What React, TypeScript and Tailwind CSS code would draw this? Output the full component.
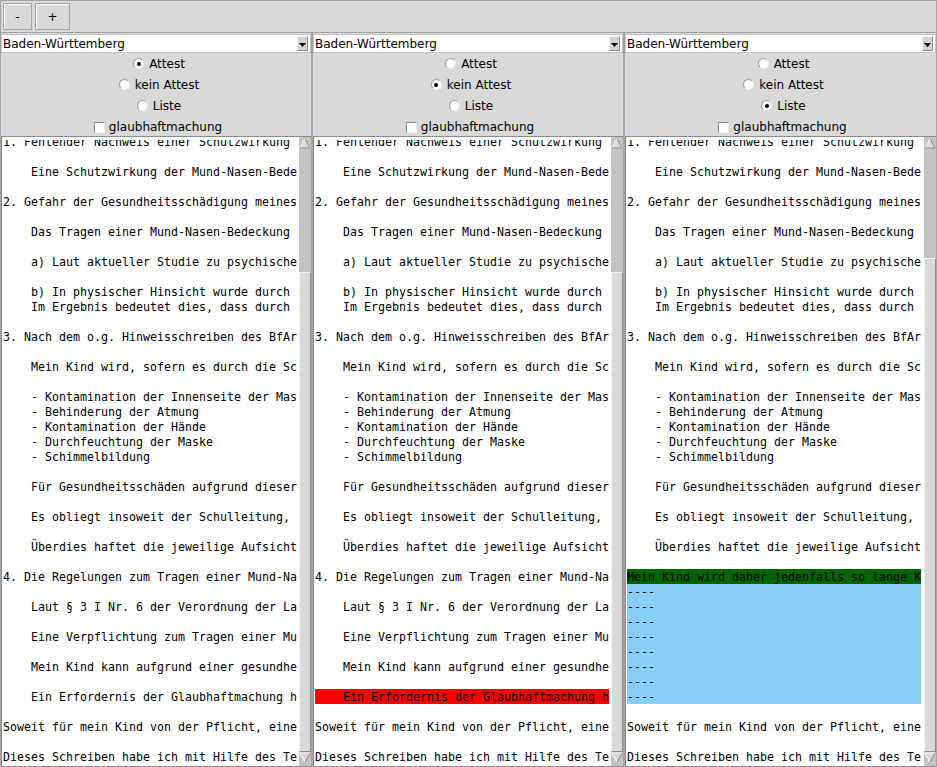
import React from "react";

type Row = { text: string; bg?: string };

const partOne = [
  "1. Fehlender Nachweis einer Schutzwirkung der Mund-Nasen-Bedeckung",
  "",
  "    Eine Schutzwirkung der Mund-Nasen-Bedeckung für Dritte ist wissenschaftlich nicht belegt.",
  "",
  "2. Gefahr der Gesundheitsschädigung meines Kindes",
  "",
  "    Das Tragen einer Mund-Nasen-Bedeckung birgt erhebliche gesundheitliche Risiken.",
  "",
  "    a) Laut aktueller Studie zu psychischen und physischen Folgen des Maskentragens",
  "",
  "    b) In physischer Hinsicht wurde durch Messungen festgestellt, dass",
  "    Im Ergebnis bedeutet dies, dass durch das Tragen der Maske die Atmung",
  "",
  "3. Nach dem o.g. Hinweisschreiben des BfArM sind folgende Risiken zu beachten",
  "",
  "    Mein Kind wird, sofern es durch die Schule zum Tragen angehalten wird,",
  "",
  "    - Kontamination der Innenseite der Maske mit Erregern",
  "    - Behinderung der Atmung",
  "    - Kontamination der Hände",
  "    - Durchfeuchtung der Maske",
  "    - Schimmelbildung",
  "",
  "    Für Gesundheitsschäden aufgrund dieser Risiken haftet die Schule.",
  "",
  "    Es obliegt insoweit der Schulleitung, für die Sicherheit zu sorgen.",
  "",
  "    Überdies haftet die jeweilige Aufsichtsperson persönlich.",
  "",
];

const partFour = [
  "4. Die Regelungen zum Tragen einer Mund-Nasen-Bedeckung in der Schule",
  "",
  "    Laut § 3 I Nr. 6 der Verordnung der Landesregierung gilt keine Pflicht,",
  "",
  "    Eine Verpflichtung zum Tragen einer Mund-Nasen-Bedeckung besteht nicht,",
  "",
  "    Mein Kind kann aufgrund einer gesundheitlichen Beeinträchtigung keine",
  "",
  "    Ein Erfordernis der Glaubhaftmachung hierfür besteht nicht.",
];

const tail = [
  "",
  "Soweit für mein Kind von der Pflicht, eine Mund-Nasen-Bedeckung zu tragen,",
  "",
  "Dieses Schreiben habe ich mit Hilfe des Textgenerators erstellt.",
  "",
];

function buildRows(variant: number): Row[] {
  const rows: Row[] = partOne.map((text) => ({ text }));

  if (variant === 2) {
    rows.push({
      text: "Mein Kind wird daher jedenfalls so lange Keine Mund-Nasen-Bedeckung tragen,",
      bg: "bg-[#006400]",
    });
    for (let i = 0; i < 8; i++) {
      rows.push({ text: "----", bg: "bg-[#87cefa]" });
    }
  } else {
    partFour.forEach((text, i) => {
      rows.push({ text, bg: variant === 1 && i === partFour.length - 1 ? "bg-[#ff0000]" : undefined });
    });
  }

  tail.forEach((text) => rows.push({ text }));
  return rows;
}

function Radio({ checked, label }: { checked: boolean; label: string }) {
  return (
    <div className="flex h-[21px] items-center justify-center gap-[5px] pl-[6px]">
      <span className="flex h-[11px] w-[11px] items-center justify-center rounded-full border border-t-[#9a9a9a] border-l-[#9a9a9a] border-r-[#ececec] border-b-[#ececec] bg-white">
        {checked && <span className="h-[4px] w-[4px] rounded-full bg-black" />}
      </span>
      <span>{label}</span>
    </div>
  );
}

function Check({ label }: { label: string }) {
  return (
    <div className="flex h-[20px] items-center justify-center gap-[4px] pl-[4px] pt-[2px]">
      <span className="h-[11px] w-[11px] border border-t-[#8a8a8a] border-l-[#8a8a8a] border-r-[#ececec] border-b-[#ececec] bg-white" />
      <span>{label}</span>
    </div>
  );
}

function Combo() {
  return (
    <div className="mt-[1px] flex h-[19px] border border-[#c4c4c4] bg-white">
      <div className="flex-1 pl-[1px] leading-[18px]">Baden-Württemberg</div>
      <div className="my-[1px] mr-[2px] flex w-[11px] items-end justify-center border border-t-[#f4f4f4] border-l-[#f4f4f4] border-r-[#8c8c8c] border-b-[#8c8c8c] bg-[#d2d2d2] pb-[3px]">
        <svg width="7" height="4" viewBox="0 0 7 4">
          <polygon points="0,0 7,0 3.5,4" fill="#000" />
        </svg>
      </div>
    </div>
  );
}

function Arrow({ up }: { up: boolean }) {
  return (
    <svg width="12" height="12" viewBox="0 0 12 12" className="block">
      {up ? (
        <>
          <polygon points="6,1.5 11,11 1,11" fill="#d9d9d9" />
          <line x1="6" y1="1.5" x2="1" y2="11" stroke="#ffffff" strokeWidth="1" />
          <line x1="6" y1="1.5" x2="11" y2="11" stroke="#8c8c8c" strokeWidth="1" />
          <line x1="1" y1="11" x2="11" y2="11" stroke="#8c8c8c" strokeWidth="1" />
        </>
      ) : (
        <>
          <polygon points="1,1 11,1 6,10.5" fill="#d9d9d9" />
          <line x1="1" y1="1" x2="11" y2="1" stroke="#ffffff" strokeWidth="1" />
          <line x1="1" y1="1" x2="6" y2="10.5" stroke="#ffffff" strokeWidth="1" />
          <line x1="11" y1="1" x2="6" y2="10.5" stroke="#8c8c8c" strokeWidth="1" />
        </>
      )}
    </svg>
  );
}

function Scrollbar({ gapClass }: { gapClass: string }) {
  return (
    <div className="flex w-[12px] flex-col bg-[#c3c3c3]">
      <Arrow up />
      <div className="flex flex-1 flex-col">
        <div className={gapClass} />
        <div className="flex-1 border border-t-[#f4f4f4] border-l-[#f4f4f4] border-r-[#8c8c8c] border-b-[#8c8c8c] bg-[#d9d9d9]" />
      </div>
      <Arrow up={false} />
      <div className="h-[2px]" />
    </div>
  );
}

function Column({
  widthClass,
  selected,
  variant,
  gapClass,
}: {
  widthClass: string;
  selected: number;
  variant: number;
  gapClass: string;
}) {
  const rows = buildRows(variant);
  const options = ["Attest", "kein Attest", "Liste"];

  return (
    <div className={`${widthClass} flex flex-col border-x border-[#a3a3a3]`}>
      <Combo />
      <div className="flex flex-col">
        {options.map((label, i) => (
          <Radio key={label} label={label} checked={i === selected} />
        ))}
        <Check label="glaubhaftmachung" />
      </div>
      <div className="flex min-h-0 flex-1 border-t border-b border-[#8c8c8c]">
        <div className="min-w-0 flex-1 border-l border-[#8c8c8c] bg-white pl-[1px] pt-[3px]">
          <div className="h-full w-[294px] overflow-hidden">
            <div className="-mt-[6px] font-['DejaVu_Sans_Mono',monospace] text-[11.63px] leading-[17px] text-black">
              {rows.map((row, i) => (
                <div key={i} className={`h-[15px] whitespace-pre ${row.bg ?? ""}`}>
                  {row.text}
                </div>
              ))}
            </div>
          </div>
        </div>
        <Scrollbar gapClass={gapClass} />
      </div>
    </div>
  );
}

export default function App() {
  return (
    <div className="flex h-[767px] w-[937px] flex-col overflow-hidden bg-[#d9d9d9] font-['DejaVu_Sans',sans-serif] text-[12px] text-black">
      <div className="flex h-[33px] gap-[3px] border border-[#a3a3a3] pl-[2px] pt-[2px]">
        <button
          type="button"
          className="h-[27px] w-[29px] border border-[#a3a3a3] bg-[#d9d9d9] shadow-[inset_1px_1px_0_#ffffff]"
        >
          -
        </button>
        <button
          type="button"
          className="h-[27px] w-[35px] border border-[#a3a3a3] bg-[#d9d9d9] shadow-[inset_1px_1px_0_#ffffff]"
        >
          +
        </button>
      </div>
      <div className="flex min-h-0 flex-1">
        <Column widthClass="w-[312px]" selected={0} variant={0} gapClass="h-[123px]" />
        <Column widthClass="w-[312px]" selected={1} variant={1} gapClass="h-[123px]" />
        <Column widthClass="w-[313px]" selected={2} variant={2} gapClass="h-[109px]" />
      </div>
    </div>
  );
}
